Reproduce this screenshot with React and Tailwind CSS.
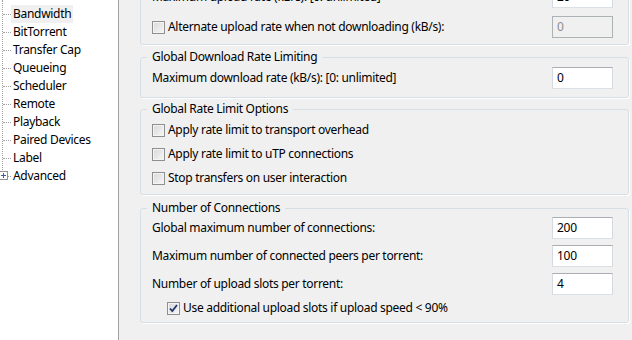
import React from 'react';

const font = { fontFamily: '"Noto Sans", "Open Sans", sans-serif' };

const treeItems = [
  'Bandwidth',
  'BitTorrent',
  'Transfer Cap',
  'Queueing',
  'Scheduler',
  'Remote',
  'Playback',
  'Paired Devices',
  'Label',
  'Advanced',
];

function Checkbox({ checked }) {
  return (
    <span className="flex h-[13px] w-[13px] shrink-0 items-center justify-center border border-[#8e8f8f] bg-gradient-to-br from-[#d8d8d8] to-[#f7f7f7] shadow-[inset_0_0_0_1px_#f4f4f4]">
      {checked && (
        <svg width="9" height="9" viewBox="0 0 9 9">
          <path d="M1 4.5 L3.3 7 L8 1" fill="none" stroke="#21366b" strokeWidth="1.8" />
        </svg>
      )}
    </span>
  );
}

function Field({ value, disabled }) {
  return (
    <div
      className={`flex h-[22px] w-[61px] shrink-0 items-center border px-[4px] text-[12px] ${
        disabled
          ? 'border-[#adb2b5] bg-[#f0f0f0] text-[#8d8d8d]'
          : 'border-[#abadb3] border-b-[#dbdfe6] border-x-[#d5d9e0] bg-white text-black'
      }`}
    >
      {value}
    </div>
  );
}

function Row({ label, value, disabled }) {
  return (
    <div className="flex h-[22px] items-center justify-between">
      <span>{label}</span>
      <Field value={value} disabled={disabled} />
    </div>
  );
}

function CheckRow({ label, checked, value, indent }) {
  return (
    <div className={`flex items-center justify-between ${value !== undefined ? 'h-[22px]' : 'h-[16px]'} ${indent ? 'pl-[15px]' : ''}`}>
      <div className="flex items-center gap-[3px]">
        <Checkbox checked={checked} />
        <span>{label}</span>
      </div>
      {value !== undefined && <Field value={value} disabled />}
    </div>
  );
}

function Group({ title, className, children }) {
  return (
    <fieldset
      className={`ml-[21px] mr-[3px] rounded-[3px] border border-[#d5dfe5] pl-[11px] pr-[15px] shadow-[1px_1px_0_#ffffff] ${className}`}
    >
      <legend className="ml-[-5px] px-[5px] leading-[16px]">{title}</legend>
      {children}
    </fieldset>
  );
}

function Tree() {
  return (
    <div className="relative w-[119px] shrink-0 border-r border-[#a0a0a0] bg-white">
      <div className="absolute left-[2px] top-0 h-[176px] border-l border-dotted border-[#a0a0a0]" />
      <div className="flex flex-col pt-[5px]">
        {treeItems.map((item, i) => (
          <div key={item} className="relative flex h-[18px] items-center">
            <span className="ml-[3px] w-[8px] border-t border-dotted border-[#a0a0a0]" />
            {i === treeItems.length - 1 && (
              <span className="absolute left-[-1px] top-[4px] flex h-[9px] w-[9px] items-center justify-center border border-[#919191] bg-white">
                <svg width="5" height="5" viewBox="0 0 5 5">
                  <path d="M0 2.5 H5 M2.5 0 V5" stroke="#3b5c8c" strokeWidth="1" />
                </svg>
              </span>
            )}
            <span className={`px-[2px] leading-[18px] ${i === 0 ? 'bg-[#f0f0f0]' : ''}`}>{item}</span>
          </div>
        ))}
      </div>
    </div>
  );
}

export default function App() {
  return (
    <div className="flex h-[340px] w-[632px] overflow-hidden text-[12px] tracking-[-0.3px] text-black" style={font}>
      <Tree />
      <div className="flex-1 bg-[#f0f0f0]">
        <Group title="Global Upload Rate Limiting" className="mt-[-31px] pt-[1px] pb-[6px]">
          <div className="flex flex-col gap-[8px]">
            <Row label="Maximum upload rate (kB/s): [0: unlimited]" value="20" />
            <CheckRow label="Alternate upload rate when not downloading (kB/s):" value="0" />
          </div>
        </Group>

        <Group title="Global Download Rate Limiting" className="mt-[4px] pt-[2px] pb-[8px]">
          <Row label="Maximum download rate (kB/s): [0: unlimited]" value="0" />
        </Group>

        <Group title="Global Rate Limit Options" className="mt-[3px] pt-[5px] pb-[8px]">
          <div className="flex flex-col gap-[8px]">
            <CheckRow label="Apply rate limit to transport overhead" />
            <CheckRow label="Apply rate limit to uTP connections" />
            <CheckRow label="Stop transfers on user interaction" />
          </div>
        </Group>

        <Group title="Number of Connections" className="mt-[5px] pt-[1px] pb-[6px]">
          <div className="flex flex-col gap-[6px]">
            <Row label="Global maximum number of connections:" value="200" />
            <Row label="Maximum number of connected peers per torrent:" value="100" />
            <Row label="Number of upload slots per torrent:" value="4" />
          </div>
          <div className="mt-[5px]">
            <CheckRow label="Use additional upload slots if upload speed < 90%" checked indent />
          </div>
        </Group>
      </div>
    </div>
  );
}
